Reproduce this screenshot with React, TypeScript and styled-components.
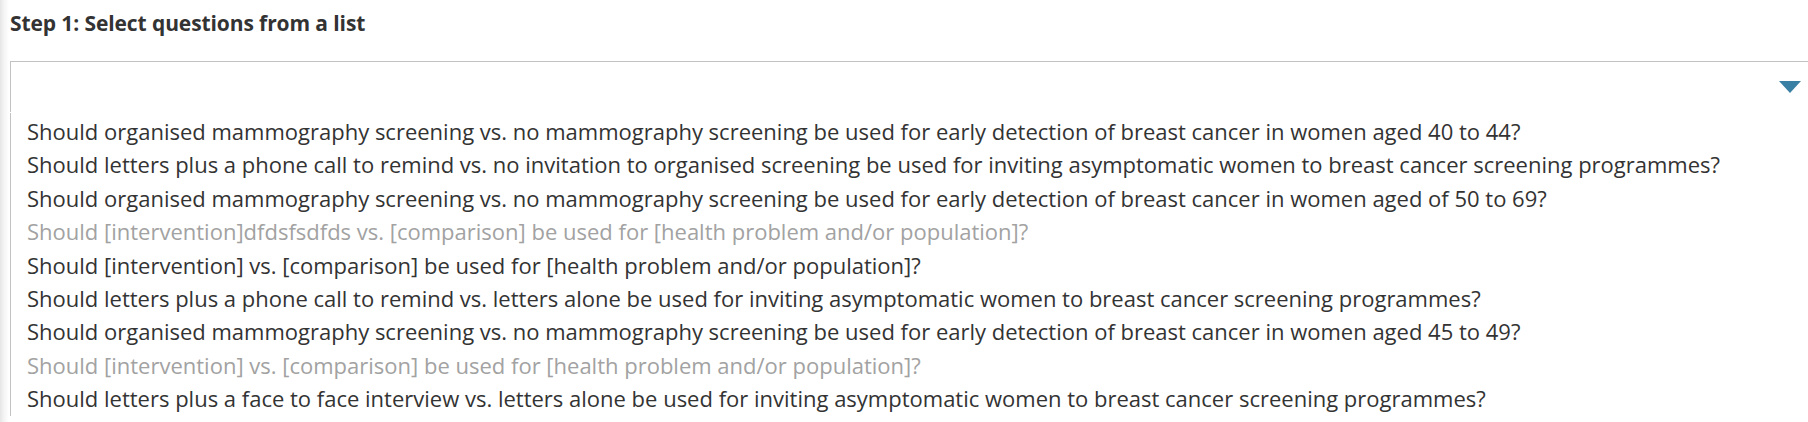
import React from "react";
import styled, { createGlobalStyle } from "styled-components";

const GlobalStyle = createGlobalStyle`
  html, body {
    margin: 0;
    padding: 0;
    background: #fff;
    overflow: hidden;
  }
  body {
    font-family: "Open Sans", "Noto Sans", sans-serif;
    color: #333;
  }
`;

const StyledPage = styled.div`
  display: flex;
  flex-direction: column;
  height: 422px;
  padding-left: 10px;
  background: linear-gradient(to right, #e6e6e6 0, #f4f4f4 4px, #fff 9px);
  overflow: hidden;
`;

const StyledTitle = styled.h2`
  margin: 0;
  padding-top: 9px;
  height: 61px;
  box-sizing: border-box;
  font-size: 21px;
  line-height: 29px;
  font-weight: 700;
  color: #333;
  letter-spacing: -0.1px;
`;

const StyledSelect = styled.div`
  display: flex;
  flex-direction: column;
  margin-right: -20px;
  background: #fff;
`;

const StyledSelectHead = styled.div`
  display: flex;
  align-items: flex-start;
  justify-content: flex-end;
  height: 51px;
  box-sizing: border-box;
  border-top: 1px solid #c2c2c2;
  border-left: 1px solid #c2c2c2;
  padding: 19px 27px 0 0;
`;

const StyledArrow = styled.span`
  width: 0;
  height: 0;
  border-left: 11px solid transparent;
  border-right: 11px solid transparent;
  border-top: 12px solid #3a80a5;
`;

const StyledList = styled.ul`
  list-style: none;
  margin: 1px 0 0;
  padding: 2px 0 0 16px;
  border-left: 1px solid #c2c2c2;
`;

const StyledOption = styled.li<{ $disabled?: boolean }>`
  font-size: 22px;
  line-height: 33.4px;
  white-space: nowrap;
  color: ${(p) => (p.$disabled ? "#a2a2a2" : "#333")};
  cursor: ${(p) => (p.$disabled ? "default" : "pointer")};
`;

const questions = [
  { text: "Should organised mammography screening vs. no mammography screening be used for early detection of breast cancer in women aged 40 to 44?" },
  { text: "Should letters plus a phone call to remind vs. no invitation to organised screening be used for inviting asymptomatic women to breast cancer screening programmes?" },
  { text: "Should organised mammography screening vs. no mammography screening be used for early detection of breast cancer in women aged of 50 to 69?" },
  { text: "Should [intervention]dfdsfsdfds vs. [comparison] be used for [health problem and/or population]?", disabled: true },
  { text: "Should [intervention] vs. [comparison] be used for [health problem and/or population]?" },
  { text: "Should letters plus a phone call to remind vs. letters alone be used for inviting asymptomatic women to breast cancer screening programmes?" },
  { text: "Should organised mammography screening vs. no mammography screening be used for early detection of breast cancer in women aged 45 to 49?" },
  { text: "Should [intervention] vs. [comparison] be used for [health problem and/or population]?", disabled: true },
  { text: "Should letters plus a face to face interview vs. letters alone be used for inviting asymptomatic women to breast cancer screening programmes?" },
];

export default function App() {
  return (
    <>
      <GlobalStyle />
      <StyledPage>
        <StyledTitle>Step 1: Select questions from a list</StyledTitle>
        <StyledSelect>
          <StyledSelectHead>
            <StyledArrow />
          </StyledSelectHead>
          <StyledList>
            {questions.map((q, i) => (
              <StyledOption key={i} $disabled={q.disabled}>
                {q.text}
              </StyledOption>
            ))}
          </StyledList>
        </StyledSelect>
      </StyledPage>
    </>
  );
}
